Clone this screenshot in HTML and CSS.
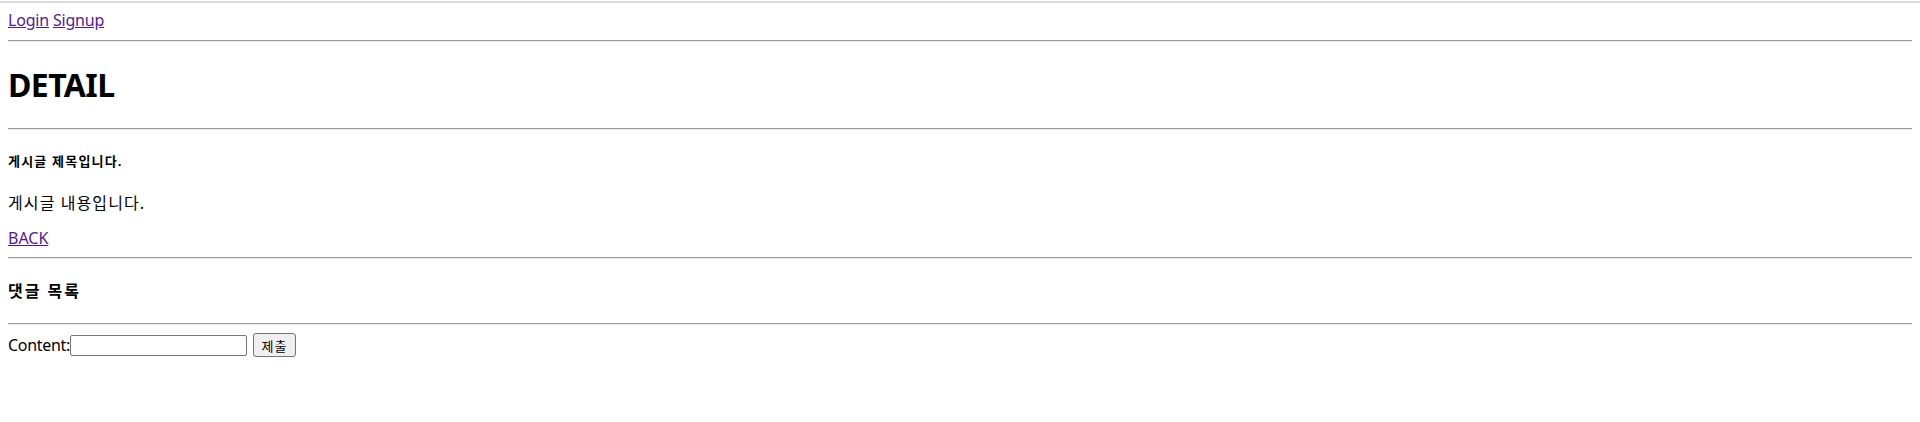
FILE: index.html
```html
<!DOCTYPE html>
<html lang="ko">
<head>
<meta charset="utf-8">
<title>DETAIL</title>
<link rel="stylesheet" href="styles.css">
</head>
<body>
<div class="topline"></div>
<div class="page">
  <nav class="nav"><a href="#">Login</a> <a href="#">Signup</a></nav>
  <hr class="rule">
  <h1 class="title">DETAIL</h1>
  <hr class="rule">
  <h5 class="post-title">게시글 제목입니다.</h5>
  <p class="post-body">게시글 내용입니다.</p>
  <a class="back" href="#">BACK</a>
  <hr class="rule">
  <h4 class="comments-title">댓글 목록</h4>
  <hr class="rule">
  <form class="comment-form">
    <label class="label">Content:</label><input class="field" type="text"><button class="submit" type="button">제출</button>
  </form>
</div>
</body>
</html>
```
FILE: styles.css
```css
html, body {
  margin: 0;
  padding: 0;
  background: #fff;
}
body {
  font-family: "Noto Sans", "Noto Sans CJK KR", sans-serif;
  font-size: 16px;
  color: #000;
}
.topline {
  margin-top: 1px;
  height: 2px;
  background: #dcdcdc;
}
.page {
  padding: 5px 8px 0 8px;
}
a {
  color: #551a8b;
}
.nav {
  line-height: 24px;
  letter-spacing: -0.2px;
}
.rule {
  margin: 8px 0;
  border: 0;
  border-top: 1px solid #9a9a9a;
  border-bottom: 1px solid #eeeeee;
  height: 0;
}
.title {
  font-size: 32px;
  font-weight: 700;
  margin: 21px 0;
  line-height: 44px;
  letter-spacing: -0.6px;
}
.post-title {
  font-size: 13px;
  font-weight: 700;
  margin: 22px 0;
  line-height: 18px;
  letter-spacing: 1.2px;
}
.post-body {
  margin: 16px 0 13px;
  line-height: 22px;
  letter-spacing: 1.1px;
}
.back {
  display: inline-block;
  line-height: 20px;
}
.comments-title {
  font-size: 16px;
  font-weight: 700;
  margin: 21px 0;
  line-height: 22px;
  letter-spacing: 2px;
}
.comment-form {
  display: flex;
  align-items: center;
  line-height: 22px;
}
.label {
  letter-spacing: -0.3px;
}
.field {
  box-sizing: border-box;
  width: 177px;
  height: 21px;
  padding: 1px 2px;
  border: 1px solid #767676;
  border-radius: 2px;
  font-size: 13px;
  margin: 0;
}
.submit {
  box-sizing: border-box;
  margin-left: 6px;
  width: 43px;
  height: 24px;
  padding: 0;
  font-family: "Noto Sans CJK KR", sans-serif;
  font-size: 13px;
  letter-spacing: 1px;
  background: #efefef;
  border: 1px solid #767676;
  border-radius: 3px;
  color: #000;
}
```
